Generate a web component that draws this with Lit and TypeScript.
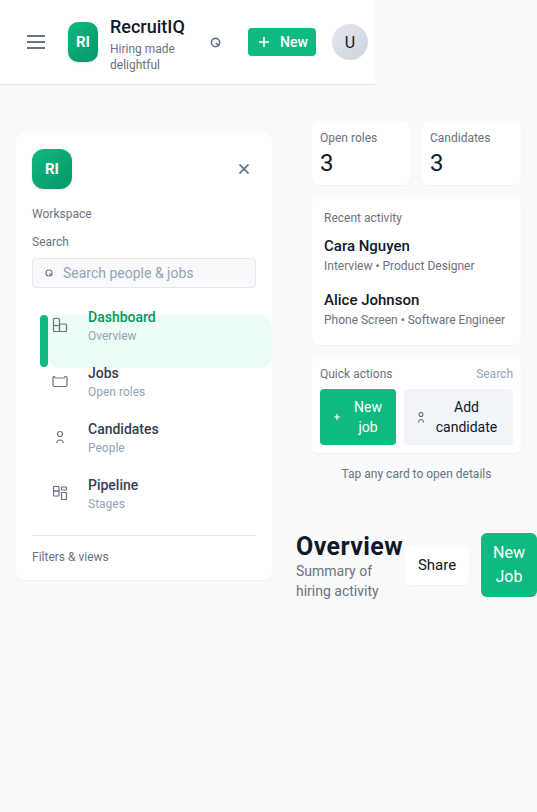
import { LitElement, html, css, svg } from 'lit';
import { customElement } from 'lit/decorators.js';

const navIcons = {
  dashboard: svg`<rect x="1.5" y="1.5" width="6" height="13" rx="1"/><rect x="7.5" y="7" width="7" height="7.500" rx="1"/><path d="M1.5 8.500h6"/>`,
  jobs: svg`<path d="M2.500 3.500c0 1 .5 1.500 1 1.500h8.500c.5 0 1-.5 1-1.500h1a1 1 0 0 1 1 1v7.500a1.500 1.500 0 0 1-1.500 1.500H2.500A1.500 1.500 0 0 1 1 12V4.500a1 1 0 0 1 1-1z"/>`,
  candidates: svg`<circle cx="8" cy="5" r="2.500"/><path d="M4.800 14c0-2 1-3 3.200-3s3.200 1 3.200 3"/>`,
  pipeline: svg`<rect x="1.500" y="1.500" width="5.500" height="9.500" rx=".5"/><path d="M1.500 6h5.500" stroke-width="1.600"/><rect x="9.500" y="2" width="5" height="3" rx=".5"/><rect x="9.500" y="7.500" width="5" height="7" rx=".5"/>`,
};

const navItems = [
  { key: 'dashboard', title: 'Dashboard', sub: 'Overview', active: true },
  { key: 'jobs', title: 'Jobs', sub: 'Open roles', active: false },
  { key: 'candidates', title: 'Candidates', sub: 'People', active: false },
  { key: 'pipeline', title: 'Pipeline', sub: 'Stages', active: false },
] as const;

const searchIcon = (size: number) => html`<svg width=${size} height=${size} viewBox="0 0 12 12" fill="none" stroke="currentColor" stroke-width="1.7"><circle cx="6" cy="6" r="4.500"/><path d="M6.500 6.500l3.500 3.500"/></svg>`;

@customElement('app-root')
export class AppRoot extends LitElement {
  static styles = css`
    :host {
      display: block;
      min-height: 812px;
      background: #f8fafc;
      color: #0f172a;
      font-family: Roboto, 'Noto Sans', sans-serif;
      overflow: hidden;
    }
    * { box-sizing: border-box; }

    .topbar {
      width: 375px;
      height: 85px;
      display: flex;
      align-items: center;
      padding: 0 7px 0 27px;
      background: #fff;
      border-bottom: 1px solid #e5e7eb;
    }
    .menu { width: 18px; height: 14px; flex: none; margin-right: 23px; color: #6b7280; }
    .logo-small {
      width: 30px; height: 40px; flex: none;
      display: grid; place-items: center;
      border-radius: 10px;
      background: linear-gradient(135deg, #10b981, #059669);
      color: #fff;
      font-weight: 700;
      font-size: 15px;
      box-shadow: 0 1px 2px rgba(0,0,0,.12);
    }
    .brand { width: 88px; flex: none; margin-left: 12px; padding-top: 4px; }
    .brand-name { font-size: 18px; line-height: 22px; font-weight: 500; color: #111827; }
    .brand-sub { font-size: 12px; line-height: 16px; color: #6b7280; margin-top: 3px; }
    .top-search { flex: none; margin-left: 12px; color: #64748b; display: flex; }
    .new-btn {
      flex: none;
      width: 68px; height: 28px;
      margin-left: 27px;
      display: flex; align-items: center; gap: 11px;
      padding-left: 11px;
      border-radius: 4px;
      background: #10b981;
      color: #fff;
      font-size: 14px;
      font-weight: 500;
    }
    .avatar {
      flex: none;
      width: 36px; height: 36px;
      margin-left: 16px;
      border-radius: 50%;
      background: linear-gradient(135deg, #e5e7eb, #cbd5e1);
      display: grid; place-items: center;
      font-size: 16px;
      color: #111827;
    }

    .shell { display: flex; align-items: flex-start; }

    .sidebar {
      width: 256px; height: 447px;
      flex: none;
      margin: 48px 24px 0 16px;
      padding: 16px;
      background: #fff;
      border-radius: 8px;
      box-shadow: 0 1px 2px rgba(15,23,42,.05);
    }
    .side-head { display: flex; align-items: center; justify-content: space-between; }
    .logo-big {
      width: 40px; height: 40px;
      display: grid; place-items: center;
      border-radius: 12px;
      background: linear-gradient(135deg, #10b981, #059669);
      color: #fff;
      font-weight: 700;
      font-size: 15px;
      box-shadow: 0 1px 2px rgba(0,0,0,.12);
    }
    .close { display: flex; color: #64748b; margin-right: 7px; }
    .label { font-size: 12px; line-height: 16px; color: #6b7280; }
    .workspace { margin-top: 17px; }
    .search-label { margin-top: 12px; }
    .search {
      height: 30px;
      margin-top: 8px;
      display: flex; align-items: center; gap: 10px;
      padding: 0 0 1px 12px;
      background: #f8fafc;
      border: 1px solid #e5e7eb;
      border-radius: 4px;
      color: #94a3b8;
      font-size: 14px;
    }
    .search svg { color: #6b7280; }

    .nav { margin-top: 7px; }
    .nav-item {
      position: relative;
      height: 56px;
      display: flex;
      align-items: flex-start;
      padding: 13px 0 0 20px;
    }
    .nav-item.active::before {
      content: '';
      position: absolute;
      left: 16px; right: -16px; top: 20px;
      height: 53px;
      border-radius: 12px;
      background: #ecfdf5;
    }
    .nav-item.active::after {
      content: '';
      position: absolute;
      left: 8px; top: 20px;
      width: 8px; height: 52px;
      border-radius: 6px;
      background: #10b981;
    }
    .nav-icon {
      position: relative;
      width: 16px; height: 16px;
      flex: none;
      margin: 9px 20px 0 0;
      color: #6b7280;
    }
    .nav-text { position: relative; }
    .nav-title { font-size: 14px; line-height: 18px; font-weight: 500; color: #334155; }
    .active .nav-title { color: #059669; }
    .nav-sub { font-size: 12px; line-height: 16px; margin-top: 2px; color: #94a3b8; }
    .side-foot {
      margin-top: 16px;
      padding-top: 13px;
      border-top: 1px solid #e5e7eb;
      font-size: 12px;
      line-height: 16px;
      color: #6b7280;
    }

    .right { width: 241px; flex: none; margin-top: 36px; }
    .rail { width: 209px; margin-left: 16px; display: flex; flex-direction: column; gap: 12px; }
    .card {
      background: #fff;
      border-radius: 6px;
      box-shadow: 0 1px 2px rgba(15,23,42,.04);
    }
    .stats { display: grid; grid-template-columns: 98px 99px; gap: 12px; }
    .stat { height: 64px; padding: 9px 8px 8px; }
    .stat-label { font-size: 12px; line-height: 16px; color: #6b7280; }
    .stat-value { font-size: 24px; line-height: 30px; color: #111827; margin-top: 2px; }

    .activity { height: 148px; padding: 13px 12px 12px; }
    .person { margin-top: 9px; }
    .person + .person { margin-top: 15px; }
    .person-name { font-size: 15px; line-height: 22px; font-weight: 500; color: #111827; }
    .person-sub { font-size: 12px; line-height: 16px; margin-top: 1px; color: #6b7280; white-space: nowrap; }

    .quick { height: 96px; padding: 9px 8px 8px; }
    .quick-head { display: flex; justify-content: space-between; font-size: 12px; line-height: 16px; color: #6b7280; }
    .quick-head span + span { color: #94a3b8; }
    .quick-btns { display: grid; grid-template-columns: 76px 109px; gap: 8px; margin-top: 7px; }
    .quick-btn {
      height: 56px;
      display: flex; align-items: center;
      border-radius: 4px;
      font-size: 14px;
      line-height: 20px;
      text-align: center;
    }
    .quick-btn.primary { background: #10b981; color: #fff; padding-left: 14px; }
    .quick-btn.primary span { flex: 1; padding: 0 11px 0 11px; }
    .quick-btn.ghost { background: #f1f5f9; color: #0f172a; padding-left: 14px; }
    .quick-btn.ghost span { flex: 1; padding-left: 10px; padding-right: 14px; }
    .hint { text-align: center; font-size: 12px; line-height: 16px; color: #6b7280; margin-top: 1px; }

    .overview { display: flex; align-items: flex-start; margin-top: 51px; }
    .ov-text { width: 109px; flex: none; }
    .ov-title { font-size: 25px; letter-spacing: .4px; line-height: 28px; font-weight: 700; color: #111827; white-space: nowrap; }
    .ov-sub { font-size: 14px; line-height: 20px; color: #6b7280; width: 90px; }
    .share {
      width: 64px; height: 40px;
      flex: none;
      margin-top: 12px;
      display: grid; place-items: center;
      background: #fff;
      border-radius: 6px;
      font-size: 15px;
      color: #0f172a;
      box-shadow: 0 1px 2px rgba(15,23,42,.04);
    }
    .new-job {
      width: 56px; height: 64px;
      flex: none;
      margin-left: 12px;
      display: grid; place-items: center;
      text-align: center;
      background: #10b981;
      border-radius: 6px;
      font-size: 16px;
      line-height: 24px;
      color: #fff;
    }
  `;

  render() {
    return html`
      <header class="topbar">
        <svg class="menu" viewBox="0 0 18 14" fill="none" stroke="currentColor" stroke-width="2"><path d="M0 1h18M0 7h18M0 13h18"/></svg>
        <div class="logo-small">RI</div>
        <div class="brand">
          <div class="brand-name">RecruitIQ</div>
          <div class="brand-sub">Hiring made delightful</div>
        </div>
        <span class="top-search">${searchIcon(11)}</span>
        <div class="new-btn">
          <svg width="10" height="10" viewBox="0 0 10 10" stroke="currentColor" stroke-width="1.6"><path d="M5 0v10M0 5h10"/></svg>
          New
        </div>
        <div class="avatar">U</div>
      </header>
      <div class="shell">
        <aside class="sidebar">
          <div class="side-head">
            <div class="logo-big">RI</div>
            <svg class="close" width="10" height="10" viewBox="0 0 10 10" stroke="currentColor" stroke-width="1.8"><path d="M.5.5l9 9M9.5.5l-9 9"/></svg>
          </div>
          <div class="label workspace">Workspace</div>
          <div class="label search-label">Search</div>
          <div class="search">${searchIcon(8)}<span>Search people &amp; jobs</span></div>
          <nav class="nav">
            ${navItems.map((item) => html`
              <div class="nav-item ${item.active ? 'active' : ''}">
                <svg class="nav-icon" viewBox="0 0 16 16" fill="none" stroke="currentColor" stroke-width="1.2">${navIcons[item.key]}</svg>
                <div class="nav-text">
                  <div class="nav-title">${item.title}</div>
                  <div class="nav-sub">${item.sub}</div>
                </div>
              </div>
            `)}
          </nav>
          <div class="side-foot">Filters &amp; views</div>
        </aside>
        <div class="right">
          <div class="rail">
            <div class="stats">
              <div class="card stat"><div class="stat-label">Open roles</div><div class="stat-value">3</div></div>
              <div class="card stat"><div class="stat-label">Candidates</div><div class="stat-value">3</div></div>
            </div>
            <div class="card activity">
              <div class="stat-label">Recent activity</div>
              <div class="person"><div class="person-name">Cara Nguyen</div><div class="person-sub">Interview • Product Designer</div></div>
              <div class="person"><div class="person-name">Alice Johnson</div><div class="person-sub">Phone Screen • Software Engineer</div></div>
            </div>
            <div class="card quick">
              <div class="quick-head"><span>Quick actions</span><span>Search</span></div>
              <div class="quick-btns">
                <div class="quick-btn primary">
                  <svg width="6" height="6" viewBox="0 0 6 6" stroke="currentColor" stroke-width="1.2"><path d="M3 0v6M0 3h6"/></svg>
                  <span>New job</span>
                </div>
                <div class="quick-btn ghost">
                  <svg width="6" height="11" viewBox="0 0 6 11" fill="none" stroke="#6b7280" stroke-width="1.1"><circle cx="3" cy="2.500" r="2"/><path d="M.6 10.500c0-2 .8-3 2.400-3s2.400 1 2.400 3"/></svg>
                  <span>Add candidate</span>
                </div>
              </div>
            </div>
            <div class="hint">Tap any card to open details</div>
          </div>
          <div class="overview">
            <div class="ov-text">
              <div class="ov-title">Overview</div>
              <div class="ov-sub">Summary of hiring activity</div>
            </div>
            <div class="share">Share</div>
            <div class="new-job">New Job</div>
          </div>
        </div>
      </div>
    `;
  }
}
